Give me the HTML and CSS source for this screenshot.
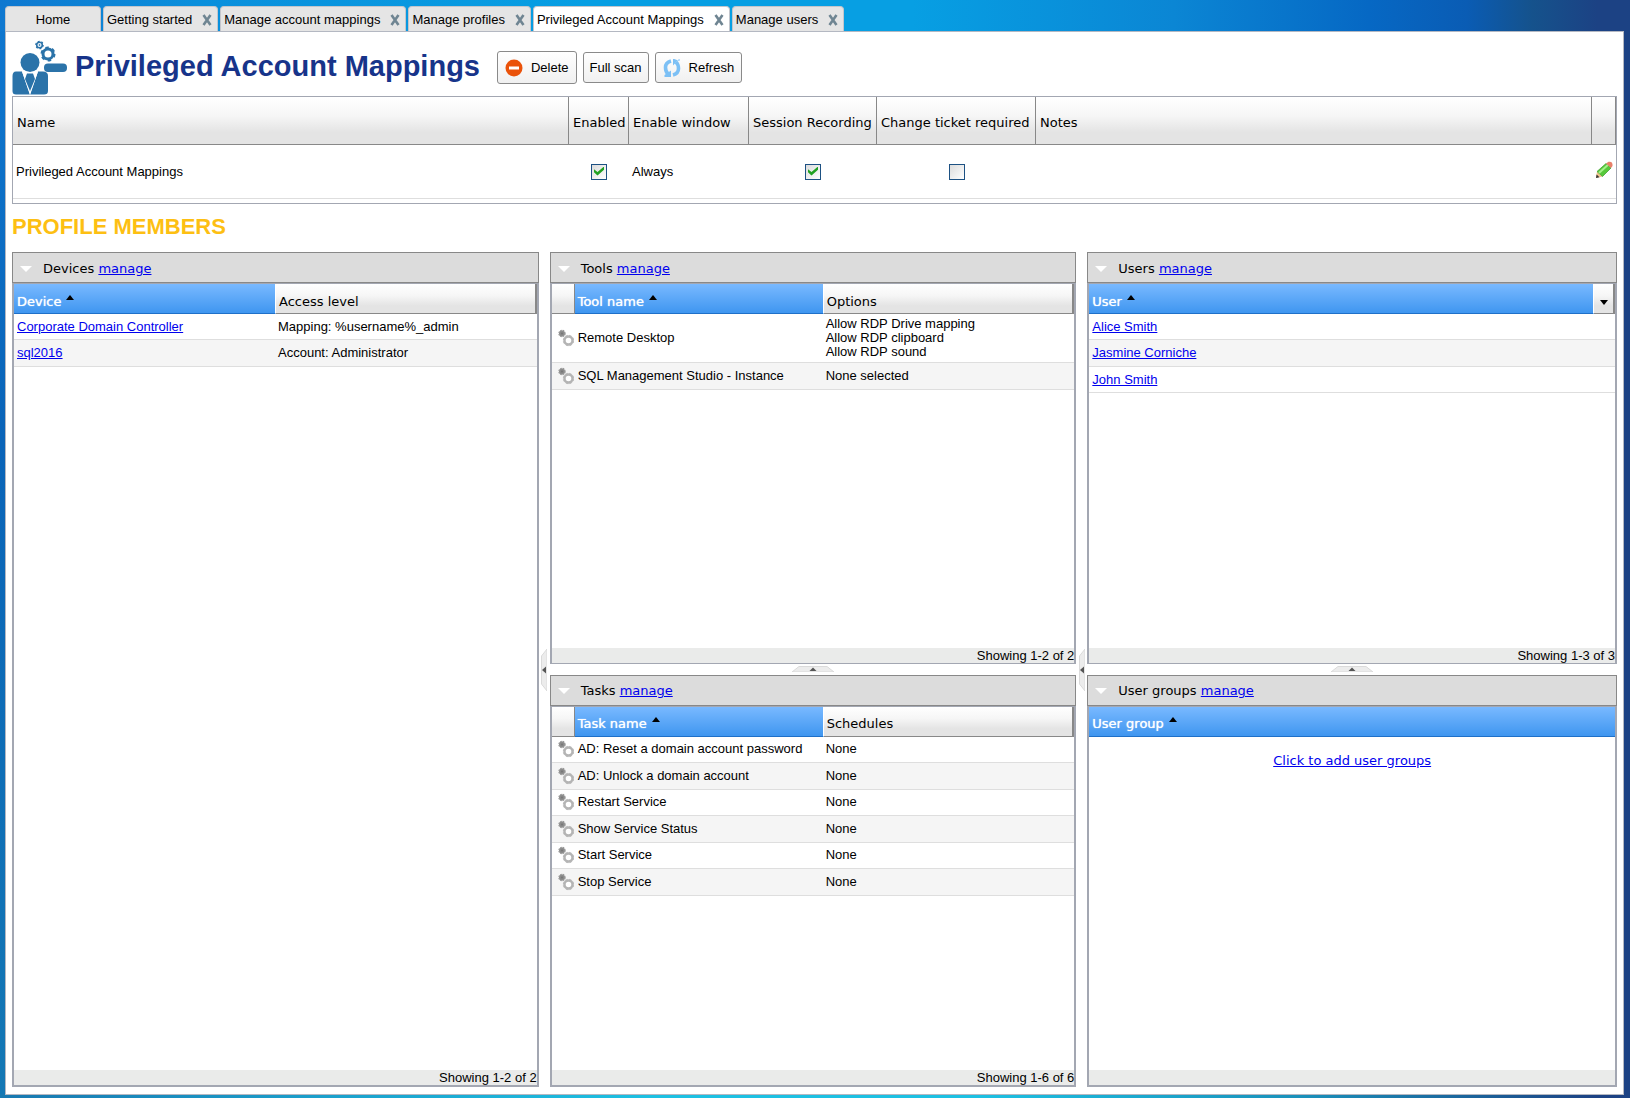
FILE: index.html
```html
<!DOCTYPE html>
<html lang="en">
<head>
<meta charset="utf-8">
<title>Privileged Account Mappings</title>
<link rel="stylesheet" href="styles.css">
</head>
<body>
<svg class="defs" aria-hidden="true">
  <symbol id="close" viewBox="0 0 10 12"><path d="M1.5 1 8.500 11M8.500 1 1.500 11" fill="none" stroke="#6f8592" stroke-width="2.600"/></symbol>
  <symbol id="cogs" viewBox="0 0 16 18">
    <circle cx="4" cy="4.500" r="3" fill="#8a8a8a" stroke="#999" stroke-width="1.400" stroke-dasharray="1.600 .8"/>
    <circle cx="4" cy="4.500" r="1" fill="#777"/>
    <circle cx="10.500" cy="11.500" r="4" fill="#fff" stroke="#b4b4b4" stroke-width="2.400"/>
    <circle cx="10.500" cy="11.500" r="5.200" fill="none" stroke="#b9b9b9" stroke-width="1" stroke-dasharray="2.800 1.280"/>
  </symbol>
</svg>

<nav class="tabs" aria-label="Open pages">
  <div class="tab tab-home"><a href="#home">Home</a></div>
  <div class="tab"><a href="#start">Getting started</a><button type="button" aria-label="Close"><svg><use href="#close"/></svg></button></div>
  <div class="tab"><a href="#mappings">Manage account mappings</a><button type="button" aria-label="Close"><svg><use href="#close"/></svg></button></div>
  <div class="tab"><a href="#profiles">Manage profiles</a><button type="button" aria-label="Close"><svg><use href="#close"/></svg></button></div>
  <div class="tab tab-active"><a href="#privileged">Privileged Account Mappings</a><button type="button" aria-label="Close"><svg><use href="#close"/></svg></button></div>
  <div class="tab"><a href="#users">Manage users</a><button type="button" aria-label="Close"><svg><use href="#close"/></svg></button></div>
</nav>

<main class="page">
  <header class="title-bar">
    <svg class="profile-icon" viewBox="13 39 56 56" aria-hidden="true">
      <g fill="#2b73a9">
        <circle cx="31" cy="61.500" r="9.500"/>
        <rect x="45" y="62.500" width="23" height="8.500" rx="4"/>
        <path d="M17 70.500H23L31 93.500H17Q13.500 93.500 13.500 90V75Q13.500 70.500 17 70.500Z"/>
        <path d="M39 70.500H44Q49 70.500 49 75V90Q49 93.500 45 93.500H31Z"/>
        <path d="M23 70.500 31 94 39 70.500 31 71Z" fill="#fff"/>
        <path d="M28 72.500H34L36 78 31 90 26 78Z"/>
      </g>
      <g fill="none" stroke="#2b73a9">
        <circle cx="49" cy="53" r="5" stroke-width="3"/>
        <circle cx="49" cy="53" r="6.500" stroke-width="2" stroke-dasharray="3.400 3.400"/>
        <circle cx="40.500" cy="44" r="2.800" stroke-width="1.600"/>
        <circle cx="40.500" cy="44" r="3.700" stroke-width="1.200" stroke-dasharray="1.900 1.900"/>
        <circle cx="40.500" cy="44" r=".6"/>
      </g>
    </svg>
    <h1>Privileged Account Mappings</h1>
    <div class="actions">
      <button type="button" class="btn btn-focus">
        <svg viewBox="0 0 18 18"><circle cx="9" cy="9" r="8.500" fill="#ea520a"/><rect x="4" y="7.500" width="10" height="3" fill="#fff"/></svg>Delete</button>
      <button type="button" class="btn">Full scan</button>
      <button type="button" class="btn btn-icon">
        <svg viewBox="0 0 18 18"><g fill="none" stroke="#7cc0f5" stroke-width="3.600"><path d="M8 2Q2.500 3.500 2.500 8.500 2.500 12.500 5 15"/><path d="M10 16Q15.500 14.500 15.500 9.500 15.500 5.500 13 3"/></g><path d="M1.500 18.500V16L8 11.500V18.500ZM16.500-.5V2L10-.5V6.500Z" fill="#7cc0f5"/></svg>Refresh</button>
    </div>
  </header>

  <div class="summary">
    <table class="grid">
      <colgroup><col class="w-name"><col class="w-enabled"><col class="w-window"><col class="w-session"><col class="w-ticket"><col><col class="w-edit"></colgroup>
      <thead><tr><th>Name</th><th>Enabled</th><th>Enable window</th><th>Session Recording</th><th>Change ticket required</th><th>Notes</th><th></th></tr></thead>
      <tbody><tr>
        <td>Privileged Account Mappings</td>
        <td class="center"><input type="checkbox" aria-label="Enabled" checked></td>
        <td>Always</td>
        <td class="center"><input type="checkbox" aria-label="Session Recording" checked></td>
        <td class="center"><input type="checkbox" aria-label="Change ticket required"></td>
        <td></td>
        <td class="edit"><button type="button" aria-label="Edit"><svg viewBox="0 0 18 18"><path d="M1 17 2 10.500 7.500 15.500Z" fill="#f2c48c"/><path d="M1 17 1.600 13.500 4.500 16.200Z" fill="#333"/><path d="M2 10.500 11 2.500 16 7 7.500 15.500Z" fill="#57c93a" stroke="#3a9a2a" stroke-width=".7"/><path d="M4 12 12.800 4" stroke="#a5f08a" stroke-width="2"/><path d="M11 2.500 13.500.8Q18 0 17.500 5L16 7Z" fill="#e8806a"/></svg></button></td>
      </tr></tbody>
    </table>
  </div>

  <h2 class="section">PROFILE MEMBERS</h2>

  <div class="board">
    <section class="panel">
      <h3><button type="button" class="fold" aria-label="Collapse"></button>Devices <a href="#devices">manage</a></h3>
      <div class="body">
        <table class="grid">
          <colgroup><col class="w-half"><col></colgroup>
          <thead><tr><th class="sorted">Device<i class="caret"></i></th><th>Access level</th></tr></thead>
          <tbody>
            <tr><td><a href="#d1">Corporate Domain Controller</a></td><td>Mapping: %username%_admin</td></tr>
            <tr><td><a href="#d2">sql2016</a></td><td>Account: Administrator</td></tr>
          </tbody>
        </table>
        <p class="count">Showing 1-2 of 2</p>
      </div>
    </section>

    <button type="button" class="split split-v" aria-label="Collapse left"><svg viewBox="0 0 6 42"><path d="M6 0V42L.5 35V7Z" fill="#ececec" stroke="#dadada"/><path d="M1 21 5 17.500V24.500Z" fill="#555"/></svg></button>

    <div class="stack">
      <section class="panel panel-top">
        <h3><button type="button" class="fold" aria-label="Collapse"></button>Tools <a href="#tools">manage</a></h3>
        <div class="body">
          <table class="grid">
            <colgroup><col class="w-icon"><col class="w-item"><col></colgroup>
            <thead><tr><th></th><th class="sorted">Tool name<i class="caret"></i></th><th>Options</th></tr></thead>
            <tbody>
              <tr><td class="cog"><svg><use href="#cogs"/></svg></td><td>Remote Desktop</td><td>Allow RDP Drive mapping<br>Allow RDP clipboard<br>Allow RDP sound</td></tr>
              <tr><td class="cog"><svg><use href="#cogs"/></svg></td><td>SQL Management Studio - Instance</td><td>None selected</td></tr>
            </tbody>
          </table>
          <p class="count">Showing 1-2 of 2</p>
        </div>
      </section>
      <button type="button" class="split split-h" aria-label="Collapse up"><svg viewBox="0 0 42 6"><path d="M0 6H42L35 .5H7Z" fill="#ececec" stroke="#dadada"/><path d="M21 1.500 24.500 5H17.500Z" fill="#555"/></svg></button>
      <section class="panel panel-bottom">
        <h3><button type="button" class="fold" aria-label="Collapse"></button>Tasks <a href="#tasks">manage</a></h3>
        <div class="body">
          <table class="grid">
            <colgroup><col class="w-icon"><col class="w-item"><col></colgroup>
            <thead><tr><th></th><th class="sorted">Task name<i class="caret"></i></th><th>Schedules</th></tr></thead>
            <tbody>
              <tr><td class="cog"><svg><use href="#cogs"/></svg></td><td>AD: Reset a domain account password</td><td>None</td></tr>
              <tr><td class="cog"><svg><use href="#cogs"/></svg></td><td>AD: Unlock a domain account</td><td>None</td></tr>
              <tr><td class="cog"><svg><use href="#cogs"/></svg></td><td>Restart Service</td><td>None</td></tr>
              <tr><td class="cog"><svg><use href="#cogs"/></svg></td><td>Show Service Status</td><td>None</td></tr>
              <tr><td class="cog"><svg><use href="#cogs"/></svg></td><td>Start Service</td><td>None</td></tr>
              <tr><td class="cog"><svg><use href="#cogs"/></svg></td><td>Stop Service</td><td>None</td></tr>
            </tbody>
          </table>
          <p class="count">Showing 1-6 of 6</p>
        </div>
      </section>
    </div>

    <button type="button" class="split split-v" aria-label="Collapse middle"><svg viewBox="0 0 6 42"><path d="M6 0V42L.5 35V7Z" fill="#ececec" stroke="#dadada"/><path d="M1 21 5 17.500V24.500Z" fill="#555"/></svg></button>

    <div class="stack">
      <section class="panel panel-top">
        <h3><button type="button" class="fold" aria-label="Collapse"></button>Users <a href="#manage-users">manage</a></h3>
        <div class="body">
          <table class="grid">
            <colgroup><col><col class="w-menu"></colgroup>
            <thead><tr><th class="sorted">User<i class="caret"></i></th><th class="menu"><button type="button" aria-label="Column menu"></button></th></tr></thead>
            <tbody>
              <tr><td colspan="2"><a href="#u1">Alice Smith</a></td></tr>
              <tr><td colspan="2"><a href="#u2">Jasmine Corniche</a></td></tr>
              <tr><td colspan="2"><a href="#u3">John Smith</a></td></tr>
            </tbody>
          </table>
          <p class="count">Showing 1-3 of 3</p>
        </div>
      </section>
      <button type="button" class="split split-h" aria-label="Collapse up"><svg viewBox="0 0 42 6"><path d="M0 6H42L35 .5H7Z" fill="#ececec" stroke="#dadada"/><path d="M21 1.500 24.500 5H17.500Z" fill="#555"/></svg></button>
      <section class="panel panel-bottom">
        <h3><button type="button" class="fold" aria-label="Collapse"></button>User groups <a href="#groups">manage</a></h3>
        <div class="body">
          <table class="grid">
            <thead><tr><th class="sorted">User group<i class="caret"></i></th></tr></thead>
          </table>
          <p class="empty"><a href="#add">Click to add user groups</a></p>
          <p class="count"></p>
        </div>
      </section>
    </div>
  </div>
</main>
</body>
</html>
```
FILE: styles.css
```css
*, *::before { box-sizing: border-box; }

body {
  margin: 0;
  height: 100vh;
  padding: 6px 6px 3px 5px;
  display: flex;
  flex-direction: column;
  overflow: hidden;
  font: 13px/14px "Liberation Sans", Arial, sans-serif;
  color: #000;
  background:
    linear-gradient(90deg, #0f78d0 0, #0a8fdc 12%, #079fe3 36%, #079fe3 56%, #0b86d4 72%, #0668c4 84%, #0a5cb4 90%, #15528c 94%, #1c4284 98%) 0 0 / 100% 31px no-repeat,
    linear-gradient(90deg, #1878b0 0, #1ba0cc 20%, #1cc0e2 40%, #1cc0e2 60%, #1a90ba 80%, #1c4284 98%) 0 100% / 100% 4px no-repeat,
    linear-gradient(#0f78d0, #0a64b8 40%, #1478b4) 0 0 / 50% 100% no-repeat,
    #1c4284;
}

h1, h2, h3, p { margin: 0; }
a { color: #0000ee; }
button { font: inherit; color: inherit; margin: 0; padding: 0; border: 0; background: none; }
svg { display: block; }
.defs { position: absolute; width: 0; height: 0; }

/* Tabs */
.tabs { display: flex; gap: 2px; flex: none; height: 25px; }
.tab {
  display: flex;
  align-items: center;
  gap: 10px;
  padding: 2px 5px 0 3px;
  border: 1px solid #c3c6cc;
  border-bottom: 0;
  border-radius: 4px 4px 0 0;
  background: #e5e5e5;
}
.tab a { color: #000; text-decoration: none; white-space: nowrap; }
.tab svg { width: 10px; height: 12px; }
.tab-home { width: 96px; justify-content: center; padding: 2px 0 0; }
.tab-active { background: #fff; margin-bottom: -2px; padding-bottom: 2px; }

/* Page */
.page {
  flex: 1;
  min-height: 0;
  display: flex;
  flex-direction: column;
  padding: 7px 6px 7px 6px;
  border: 1px solid #b4b8c2;
  background: #fff;
}
.title-bar { display: flex; align-items: center; height: 57px; flex: none; }
.profile-icon { width: 56px; height: 56px; }
h1 { margin-left: 7px; font-size: 29px; line-height: 34px; font-weight: bold; color: #17348a; padding-bottom: 4px; white-space: nowrap; }
.actions { display: flex; align-items: center; gap: 6px; margin-left: 17px; }
.btn {
  display: flex;
  align-items: center;
  gap: 8px;
  height: 31px;
  padding: 0 6px;
  border: 1px solid #8a8a8a;
  border-radius: 3px;
  background: linear-gradient(#fff, #f0f0f0);
}
.btn-icon { padding: 0 7px; }
.btn-focus { height: 33px; padding: 0 7px; }
.btn svg { width: 18px; height: 18px; }

/* Data grids */
.grid { width: 100%; border-collapse: separate; border-spacing: 0; table-layout: fixed; }
.grid th {
  height: 30px;
  padding: 6px 0 0 3px;
  text-align: left;
  white-space: nowrap;
  font: 13px/16px "DejaVu Sans", Verdana, sans-serif;
  border: 1px solid #888;
  border-width: 0 1px 1px 0;
  background: linear-gradient(#fff, #f6f6f6 40%, #e4e4e4 75%, #e4e4e4);
}
.grid th:last-child { border-right-width: 2px; }
.grid th.sorted {
  color: #fff;
  text-shadow: 0 0 1px #fff;
  border-color: #1f70c8;
  border-right-color: #fff;
  background: linear-gradient(#79b9ff, #3f96f0);
}
.grid th.sorted:last-child { border-right-width: 0; }
.caret {
  display: inline-block;
  margin-left: 5px;
  vertical-align: 6px;
  border: 4px solid transparent;
  border-top: 0;
  border-bottom: 5px solid #000;
}
.grid td { height: 26px; padding: 3px 2px; border-bottom: 1px solid #dedede; }
.grid td:first-child { padding-left: 3px; }
.grid tr:nth-child(even) td { height: 27px; background: #f5f5f5; }
.grid td.cog { padding: 0 0 0 6px; }
.grid .cog + td { padding-left: 3px; }
.cog svg { width: 16px; height: 18px; }
.w-half { width: 262px; }
.w-icon { width: 23px; }
.w-item { width: 249px; }
.w-menu { width: 21px; }
.grid th.menu { padding: 0; }
.menu button { display: block; width: 100%; height: 28px; }
.menu button::before {
  content: "";
  display: block;
  width: 8px;
  margin: 7px auto 0;
  border: 4px solid transparent;
  border-top: 5px solid #000;
  border-bottom: 0;
}

/* Summary */
.summary { flex: none; height: 108px; border: 1px solid #a3a7b2; }
.summary .grid th { height: 48px; padding: 5px 0 0 4px; }
.summary .grid th:last-child { border-right-width: 1px; }
.summary .grid td { height: 54px; padding: 0 3px; }
.w-name { width: 556px; }
.w-enabled { width: 60px; }
.w-window { width: 120px; }
.w-session { width: 128px; }
.w-ticket { width: 159px; }
.w-edit { width: 24px; }
.center { text-align: center; }
.summary .grid td.edit { padding: 0 3px; }
.edit svg { width: 18px; height: 18px; }
input[type="checkbox"] {
  appearance: none;
  display: inline-block;
  width: 16px;
  height: 16px;
  margin: 0;
  vertical-align: middle;
  border: 1px solid #1d5183;
  background: linear-gradient(135deg, #dcdcdc, #fff);
}
input[type="checkbox"]:checked::before {
  content: "";
  display: block;
  width: 10px;
  height: 9px;
  margin: 2px;
  background: #21a121;
  clip-path: polygon(0 30%, 35% 60%, 100% 0, 100% 35%, 35% 100%, 0 65%);
}

.section { flex: none; margin: 10px 0 13px; font-size: 22px; line-height: 25px; color: #fdbf13; }

/* Member panels */
.board { flex: 1; min-height: 0; display: grid; grid-template-columns: 526fr 11px 526fr 11px 529fr; }
.stack { display: flex; flex-direction: column; min-width: 0; min-height: 0; }
.panel { display: flex; flex-direction: column; min-width: 0; min-height: 0; }
.panel-top { flex: 412 1 0; }
.panel-bottom { flex: 413 1 0; }
.panel h3 {
  flex: none;
  display: flex;
  align-items: center;
  height: 31px;
  padding: 2px 0 0 7px;
  border: 1px solid #888;
  background: #dcdcdc;
  font: 13px/16px "DejaVu Sans", Verdana, sans-serif;
  white-space: pre;
}
.fold { margin-right: 11px; border: 6px solid transparent; border-top: 6px solid #fff; border-bottom: 0; }
.body {
  flex: 1;
  min-height: 0;
  display: flex;
  flex-direction: column;
  border: 2px solid #a3a7b2;
  border-top-width: 1px;
}
.panel-top .body { border-bottom-width: 1px; }
.count { flex: none; margin-top: auto; height: 15px; line-height: 15px; text-align: right; background: #eaebea; }
.empty { padding-top: 16px; text-align: center; font: 13px/16px "DejaVu Sans", Verdana, sans-serif; }
.split { display: flex; align-items: center; justify-content: center; }
.split-h { flex: none; height: 11px; }
.split-h svg { width: 42px; height: 6px; }
.split-v svg { width: 6px; height: 42px; }
```
